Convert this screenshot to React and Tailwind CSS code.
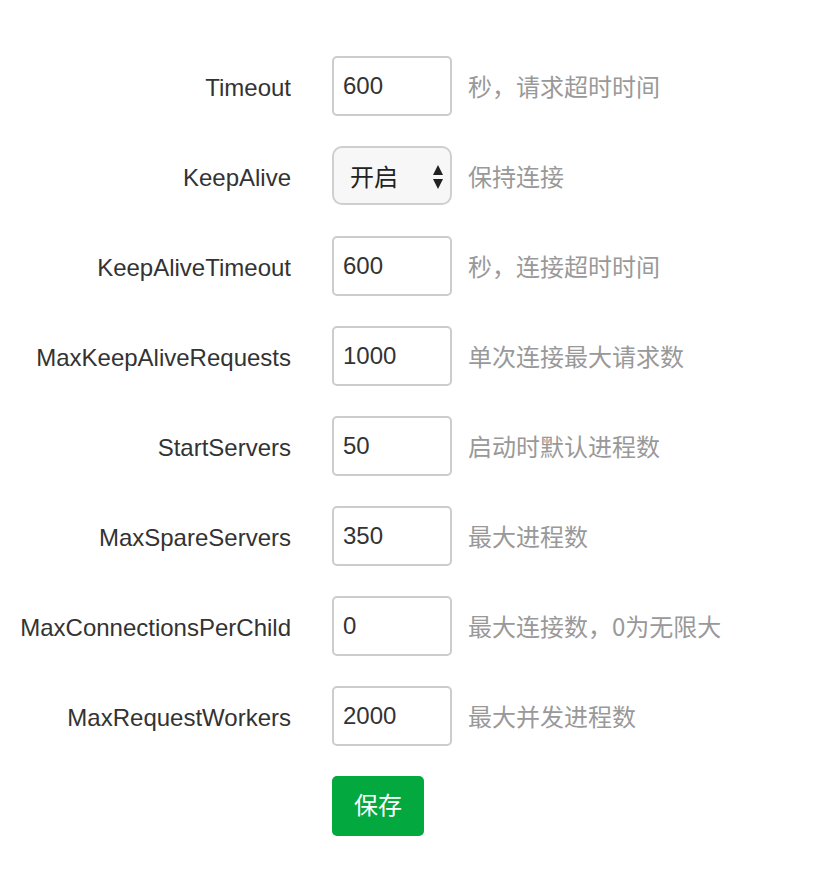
import React from "react";

const rows = [
  { label: "Timeout", value: "600", help: "秒，请求超时时间" },
  { label: "KeepAlive", select: "开启", help: "保持连接" },
  { label: "KeepAliveTimeout", value: "600", help: "秒，连接超时时间" },
  { label: "MaxKeepAliveRequests", value: "1000", help: "单次连接最大请求数" },
  { label: "StartServers", value: "50", help: "启动时默认进程数" },
  { label: "MaxSpareServers", value: "350", help: "最大进程数" },
  { label: "MaxConnectionsPerChild", value: "0", help: "最大连接数，0为无限大" },
  { label: "MaxRequestWorkers", value: "2000", help: "最大并发进程数" },
];

export default function App() {
  return (
    <div
      className="w-[838px] h-[880px] bg-white pt-[56px]"
      style={{ fontFamily: '"Liberation Sans", "Noto Sans CJK SC", sans-serif' }}
    >
      <div className="flex flex-col gap-[30px]">
        {rows.map((r) => (
          <div key={r.label} className="flex items-center h-[60px]">
            <div className="w-[291px] text-right text-[24px] text-[#333] pt-[3px]">{r.label}</div>
            <div className="ml-[41px] w-[120px] h-[60px]">
              {r.select ? (
                <div className="relative w-[120px] h-[59px] border-2 border-[#cfcfcf] rounded-[10px] bg-[#f7f7f7] flex items-center pl-[16px] text-[24px] text-[#222]">
                  <span style={{ fontFamily: '"Noto Sans CJK SC", sans-serif' }}>{r.select}</span>
                  <svg className="absolute left-[98px] top-[16px]" width="12" height="26" viewBox="0 0 12 26">
                    <polygon points="6,1 11,11 1,11" fill="#222" />
                    <polygon points="1,15 11,15 6,25" fill="#222" />
                  </svg>
                </div>
              ) : (
                <div className="w-[120px] h-[60px] border-2 border-[#cccccc] rounded-[5px] bg-white flex items-center pl-[9px] text-[24px] text-[#333]">
                  {r.value}
                </div>
              )}
            </div>
            <div
              className="ml-[16px] text-[24px] text-[#999]"
              style={{ fontFamily: '"Noto Sans CJK SC", sans-serif' }}
            >
              {r.help}
            </div>
          </div>
        ))}
        <div className="flex">
          <div className="ml-[332px] w-[92px] h-[60px] pb-[4px] rounded-[5px] bg-[#03a83f] text-white text-[24px] flex items-center justify-center"
            style={{ fontFamily: '"Noto Sans CJK SC", sans-serif' }}>
            保存
          </div>
        </div>
      </div>
    </div>
  );
}
